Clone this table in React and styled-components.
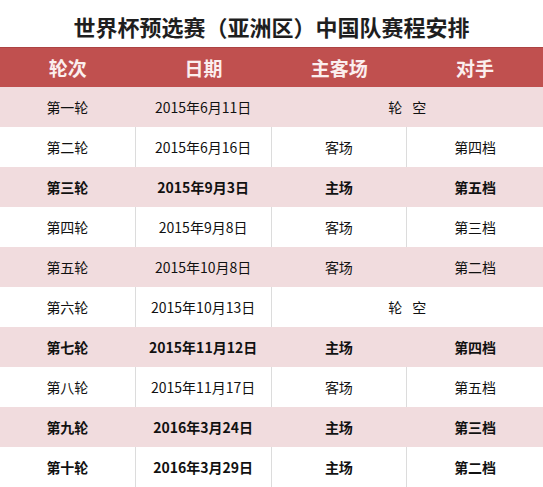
import React from 'react';
import styled, { createGlobalStyle } from 'styled-components';

const GlobalStyle = createGlobalStyle`
   html, body {
      margin: 0;
      padding: 0;
      background: #ffffff;
   }
   body {
      font-family: "Noto Sans CJK SC", "Liberation Sans", sans-serif;
   }
`;

const Page = styled.div`
   width: 543px;
   display: flex;
   flex-direction: column;
`;

const Title = styled.h1`
   margin: 0;
   height: 47px;
   display: flex;
   align-items: center;
   justify-content: center;
   padding-top: 5px;
   box-sizing: border-box;
   font-size: 22px;
   font-weight: 700;
   color: #1e1e1e;
`;

const Row = styled.div`
   display: grid;
   grid-template-columns: repeat(4, 1fr);
   height: 40px;
   background: ${props => props.striped ? '#f1dcde' : '#ffffff'};
   font-weight: ${props => props.bold ? 700 : 400};
`;

const HeaderRow = styled(Row)`
   background: #c0504f;
   border-top: 1px solid #ad4443;
   box-sizing: border-box;
   color: #fbeeee;
   font-weight: 700;
`;

const Cell = styled.div`
   display: flex;
   align-items: center;
   justify-content: center;
   grid-column: span ${props => props.span || 1};
   font-size: ${props => props.head ? '19px' : '14px'};
   color: ${props => props.head ? '#fbeeee' : '#111111'};
   white-space: pre;
   border-right: ${props => props.last || props.head ? 'none' : `1px solid ${props.striped ? '#f1dcde' : '#dcdcdc'}`};
`;

const headers = ['轮次', '日期', '主客场', '对手'];

const rounds = [
   { round: '第一轮', date: '2015年6月11日', bye: true },
   { round: '第二轮', date: '2015年6月16日', venue: '客场', pot: '第四档' },
   { round: '第三轮', date: '2015年9月3日', venue: '主场', pot: '第五档' },
   { round: '第四轮', date: '2015年9月8日', venue: '客场', pot: '第三档' },
   { round: '第五轮', date: '2015年10月8日', venue: '客场', pot: '第二档' },
   { round: '第六轮', date: '2015年10月13日', bye: true },
   { round: '第七轮', date: '2015年11月12日', venue: '主场', pot: '第四档' },
   { round: '第八轮', date: '2015年11月17日', venue: '客场', pot: '第五档' },
   { round: '第九轮', date: '2016年3月24日', venue: '主场', pot: '第三档' },
   { round: '第十轮', date: '2016年3月29日', venue: '主场', pot: '第二档' },
];

const ScheduleRow = ({ item, striped }) => {
   const bold = item.venue === '主场';

   return (
      <Row striped={striped} bold={bold}>
         <Cell striped={striped}>{item.round}</Cell>
         <Cell striped={striped}>{item.date}</Cell>
         {item.bye ? (
            <Cell striped={striped} span={2} last>{'轮\u2002\u2009空'}</Cell>
         ) : (
            <>
               <Cell striped={striped}>{item.venue}</Cell>
               <Cell striped={striped} last>{item.pot}</Cell>
            </>
         )}
      </Row>
   );
}

export default function App() {
   return (
      <Page>
         <GlobalStyle/>
         <Title>世界杯预选赛（亚洲区）中国队赛程安排</Title>
         <HeaderRow>
            {headers.map(h => <Cell key={h} head>{h}</Cell>)}
         </HeaderRow>
         {rounds.map((item, i) => (
            <ScheduleRow key={item.round} item={item} striped={i % 2 === 0}/>
         ))}
      </Page>
   );
}
